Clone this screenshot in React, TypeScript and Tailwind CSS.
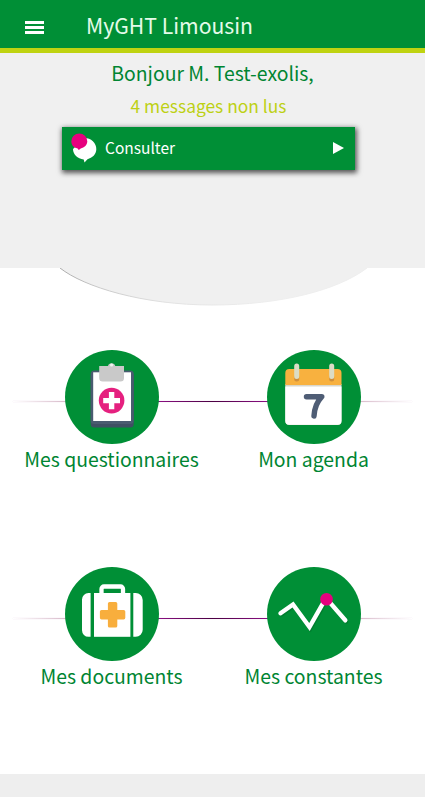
import type { ReactNode } from 'react';

function MessageIcon() {
  return (
    <svg width="28" height="32" viewBox="0 0 28 32">
      <path
        d="M14.500 5a11.800 11.200 0 0 1 11.800 11.300c0 5.200-4 8.500-8.800 10L14.500 29.500l-.8-3.100C7.500 25.500 3 21.500 3 16z"
        fill="#fff"
      />
      <path d="M9.300 .5a8 7.700 0 0 1 8 7.700c0 3.700-3 6.300-6.600 7.300L8.800 17l-1.500-1.800C3.700 14.500 1.300 12 1.300 8.200a8 7.700 0 0 1 8-7.700z" fill="#e6007e" />
    </svg>
  );
}

function ClipboardIcon() {
  return (
    <svg className="size-full" viewBox="0 0 94 94">
      <rect x="25.700" y="22.500" width="43" height="55" rx="3.500" fill="#3f4f63" />
      <rect x="25.700" y="20.500" width="43" height="53.500" rx="3.500" fill="#4a5b70" />
      <rect x="28.200" y="22.300" width="37.800" height="48.700" fill="#fff" />
      <path d="M34.200 16h8.800a3.700 3.700 0 0 1 7.200 0h8.800v12a3.500 3.500 0 0 1-3.500 3.500H37.700a3.500 3.500 0 0 1-3.500-3.500z" fill="#c9c9c9" />
      <circle cx="46.600" cy="15" r="1.600" fill="#eef5ef" />
      <circle cx="46.600" cy="50.600" r="12.800" fill="#e5207f" />
      <path d="M43.900 42h5.400v5.900h5.700v5.400h-5.700v5.900h-5.400v-5.900h-5.700v-5.400h5.700z" fill="#fff" />
    </svg>
  );
}

function CalendarIcon() {
  return (
    <svg className="size-full" viewBox="0 0 94 94">
      <path d="M18.300 34h56.200v37a4 4 0 0 1-4 4H22.300a4 4 0 0 1-4-4z" fill="#d9d6cb" />
      <path d="M18.300 36.500h56.200v34.200a4 4 0 0 1-4 4H22.300a4 4 0 0 1-4-4z" fill="#fff" />
      <path d="M22.300 19h48.200a4 4 0 0 1 4 4v12H18.300V23a4 4 0 0 1 4-4z" fill="#f8b13f" />
      <path d="M29.700 27v2M64.700 27v2" stroke="#d08f3b" strokeWidth="5" strokeLinecap="round" />
      <path d="M29.700 16v10.500M64.700 16v10.500" stroke="#dcdcc5" strokeWidth="5" strokeLinecap="round" />
      <path
        d="M39.500 46.700h15.300c-5.200 5.500-7.300 11-7.800 19.300"
        fill="none"
        stroke="#4f5d75"
        strokeWidth="5.400"
        strokeLinecap="round"
        strokeLinejoin="round"
      />
    </svg>
  );
}

function MedkitIcon() {
  return (
    <svg className="size-full" viewBox="0 0 94 94">
      <path d="M36.500 28v-6a2.500 2.500 0 0 1 2.500-2.500h16.500a2.500 2.500 0 0 1 2.500 2.500v6" fill="none" stroke="#fff" strokeWidth="4.300" />
      <path d="M25.600 26v43.800h-2.100a6.500 6.500 0 0 1-6.500-6.500V32.500a6.500 6.500 0 0 1 6.500-6.500zM68.300 26h2.400a7 7 0 0 1 7 7v29.800a7 7 0 0 1-7 7h-2.400z" fill="#fff" />
      <rect x="29" y="26" width="36.400" height="43.800" fill="#fff" />
      <path
        d="M44.500 35h6.200a1.600 1.600 0 0 1 1.600 1.600v6.400h6.400a1.600 1.600 0 0 1 1.600 1.600v6.200a1.600 1.600 0 0 1-1.600 1.600h-6.400v6.600a1.600 1.600 0 0 1-1.600 1.600h-6.200a1.600 1.600 0 0 1-1.600-1.600v-6.600h-6.400a1.600 1.600 0 0 1-1.600-1.600v-6.200a1.600 1.600 0 0 1 1.600-1.600h6.400v-6.400a1.600 1.600 0 0 1 1.600-1.600z"
        fill="#f8ae3d"
      />
    </svg>
  );
}

function ChartIcon() {
  return (
    <svg className="size-full" viewBox="0 0 94 94">
      <path
        d="M13.500 46.200l12.500-8.700 16.500 22.500L59 31 78.300 53.300"
        fill="none"
        stroke="#006d27"
        strokeOpacity="0.5"
        strokeWidth="4"
        strokeLinecap="round"
        transform="translate(1 1.500)"
      />
      <path d="M13.500 46.200l12.500-8.700 16.500 22.500L59 31 78.300 53.300" fill="none" stroke="#fff" strokeWidth="4.400" strokeLinecap="round" />
      <circle cx="59.500" cy="32.200" r="6.300" fill="#e6007e" />
    </svg>
  );
}

function Tile({ label, children }: { label: string; children: ReactNode }) {
  return (
    <button className="flex flex-col items-center">
      <span className="block size-[94px] rounded-full bg-[#008f36]">{children}</span>
      <span className="whitespace-nowrap text-[19.400px] leading-[30px] text-[#008532]">{label}</span>
    </button>
  );
}

function TileRow({ className, children }: { className: string; children: ReactNode }) {
  return (
    <div className={`relative grid grid-cols-2 px-[10.500px] ${className}`}>
      <div className="absolute top-[51px] right-[13px] left-[13px] -z-10 h-px bg-[linear-gradient(90deg,transparent,#d9bccb_13%,#8c1084_36%,#4a0042_50%,#8c1084_64%,#d9bccb_87%,transparent)] shadow-[0_0_1px_rgba(140,16,132,0.25)]" />
      {children}
    </div>
  );
}

export default function App() {
  return (
    <div className="isolate flex h-[800px] w-[425px] flex-col overflow-hidden bg-white font-['Noto_Sans_CJK_SC','Noto_Sans',sans-serif]">
      <header className="flex h-[53px] shrink-0 items-center border-b-5 border-[#bfd310] bg-[#008f36]">
        <button aria-label="Menu" className="mt-[7px] ml-[25px] flex w-[19px] flex-col gap-[2px]">
          <span className="h-[3px] bg-white" />
          <span className="h-[3px] bg-white" />
          <span className="h-[3px] bg-white" />
        </button>
        <h1 className="mt-[2px] ml-[42px] text-[21.200px] leading-[34px] text-[#e4fbe9]">MyGHT Limousin</h1>
      </header>

      <section className="flex h-[215px] shrink-0 flex-col items-center bg-[#f0f0f0] pt-[5px]">
        <p className="text-[19.400px] leading-[30px] text-[#008532]">Bonjour M. Test-exolis,</p>
        <p className="mt-[3px] mr-[8px] text-[17.400px] leading-[30px] text-[#bdd014]">4 messages non lus</p>
        <button className="mt-[6px] mr-[8px] flex h-[43px] w-[293px] items-center bg-[#008f36] pl-[8px] text-white shadow-[1px_2px_5px_1px_rgba(0,0,0,0.65)]">
          <MessageIcon />
          <span className="mb-[2px] ml-[7px] text-[15.500px]">Consulter</span>
          <svg className="mr-[11px] mb-[2px] ml-auto" width="11" height="12" viewBox="0 0 11 12">
            <path d="M0 0l11 6-11 6z" fill="#fff" />
          </svg>
        </button>
      </section>

      <svg className="h-[40px] w-full shrink-0" viewBox="0 0 425 40">
        <defs>
          <linearGradient id="edge">
            <stop offset="0" stopColor="#aaa" />
            <stop offset="0.120" stopColor="#c8c8c8" />
            <stop offset="0.350" stopColor="#e2e2e2" />
            <stop offset="0.700" stopColor="#eee" />
          </linearGradient>
        </defs>
        <path d="M60 0C84 19 143 37 212 37S338 22 367 0z" fill="#f0f0f0" />
        <path d="M60 0C84 19 143 37 212 37S338 22 367 0" fill="none" stroke="url(#edge)" strokeWidth="1" />
      </svg>

      <main className="grow">
        <TileRow className="mt-[42px]">
          <Tile label="Mes questionnaires">
            <ClipboardIcon />
          </Tile>
          <Tile label="Mon agenda">
            <CalendarIcon />
          </Tile>
        </TileRow>
        <TileRow className="mt-[93px]">
          <Tile label="Mes documents">
            <MedkitIcon />
          </Tile>
          <Tile label="Mes constantes">
            <ChartIcon />
          </Tile>
        </TileRow>
      </main>

      <footer className="mb-[3px] h-[23px] shrink-0 bg-[#eee]" />
    </div>
  );
}
